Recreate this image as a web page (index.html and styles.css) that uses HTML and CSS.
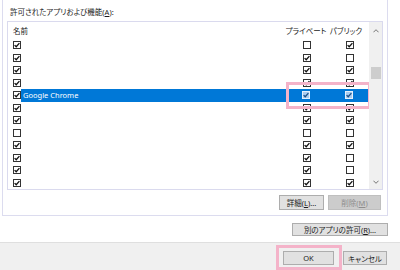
FILE: index.html
```html
<!DOCTYPE html>
<html lang="ja">
<head>
  <meta charset="UTF-8" />
  <title>許可されたアプリ</title>
  <link rel="stylesheet" href="styles.css">
</head>
<body>
  <svg class="defs" width="0" height="0">
    <symbol id="on" viewBox="0 0 8 8">
      <rect x="0.5" y="0.5" width="7" height="7" fill="#fff" stroke="#333"/>
      <path d="M1.6 4.1 L3.2 5.7 L6.4 2.1" fill="none" stroke="#111" stroke-width="1.3"/>
    </symbol>
    <symbol id="off" viewBox="0 0 8 8">
      <rect x="0.5" y="0.5" width="7" height="7" fill="#fff" stroke="#333"/>
    </symbol>
    <symbol id="sel" viewBox="0 0 8 8">
      <rect x="0.5" y="0.5" width="7" height="7" fill="#a9cdf0" stroke="#e6f1fc"/>
      <path d="M1.6 4.1 L3.2 5.7 L6.4 2.1" fill="none" stroke="#1d4f86" stroke-width="1.3"/>
    </symbol>
  </svg>

  <div class="group">
    <div class="group-label jp">許可されたアプリおよび機能(<u>A</u>):</div>

    <div class="listbox">
      <div class="list-main">
        <div class="list-head jp">
          <div class="col-name">名前</div>
          <div class="col-priv">プライベート</div>
          <div class="col-pub">パブリック</div>
        </div>
        <div class="list-body" id="rows"></div>
        <div class="mark mark-row"></div>
      </div>
      <div class="scrollbar">
        <svg class="arrow" viewBox="0 0 7 4"><path d="M0.5 3.5 L3.5 0.5 L6.5 3.5" fill="none" stroke="#606060"/></svg>
        <div class="thumb"></div>
        <svg class="arrow arrow-down" viewBox="0 0 7 4"><path d="M0.5 0.5 L3.5 3.5 L6.5 0.5" fill="none" stroke="#606060"/></svg>
      </div>
    </div>

    <div class="list-actions">
      <button class="btn btn-detail jp">詳細(<u>L</u>)...</button>
      <button class="btn btn-remove jp" disabled>削除(<u>M</u>)</button>
    </div>
  </div>

  <div class="other-row">
    <button class="btn btn-other jp">別のアプリの許可(<u>R</u>)...</button>
  </div>

  <div class="footer">
    <div class="ok-wrap">
      <button class="btn btn-ok">OK</button>
      <div class="mark mark-ok"></div>
    </div>
    <button class="btn btn-cancel jp">キャンセル</button>
  </div>

  <script>
    // [名前, プライベート, パブリック, 表示名]
    const apps = [
      [1, 0, 1, ""],
      [1, 1, 0, ""],
      [1, 1, 1, ""],
      [1, 1, 1, ""],
      [1, 1, 1, "Google Chrome"],
      [1, 1, 1, ""],
      [1, 1, 1, ""],
      [0, 0, 0, ""],
      [1, 1, 1, ""],
      [1, 1, 0, ""],
      [1, 1, 0, ""],
      [1, 1, 1, ""]
    ];

    const box = (on, selected) => {
      const id = selected ? (on ? "sel" : "off") : (on ? "on" : "off");
      return `<svg class="cb"><use href="#${id}"/></svg>`;
    };

    document.getElementById("rows").innerHTML = apps.map(a => {
      const selected = a[3] !== "";
      return `<div class="row${selected ? " selected" : ""}">
        <div class="col-name">${box(a[0], false)}<span class="name">${a[3]}</span></div>
        <div class="col-priv">${box(a[1], selected)}</div>
        <div class="col-pub">${box(a[2], selected)}</div>
      </div>`;
    }).join("");
  </script>
</body>
</html>
```

FILE: styles.css
```css
body {
  margin: 0;
  width: 400px;
  height: 270px;
  overflow: hidden;
  background: #fff;
  color: #1a1a1a;
  font-family: "Noto Sans", "Noto Sans CJK JP", sans-serif;
  font-size: 7.5px;
  display: flex;
  flex-direction: column;
}

.defs {
  position: absolute;
}

.jp {
  font-feature-settings: "palt";
}

.group {
  margin-left: 2px;
  width: 386px;
  box-sizing: border-box;
  border: 1px solid #dcdcef;
  border-top: none;
  padding: 6px 4px 5px 4px;
}

.group-label {
  margin-left: 3px;
  line-height: 13px;
  margin-bottom: 2px;
}

.listbox {
  height: 169px;
  box-sizing: border-box;
  border: 1px solid #dadaee;
  display: flex;
}

.list-main {
  flex: 1;
  position: relative;
  overflow: hidden;
}

.list-head,
.row {
  display: flex;
  align-items: center;
}

.list-head {
  height: 17px;
}

.row {
  height: 12.5px;
}

.col-name {
  flex: 1;
  display: flex;
  align-items: center;
  padding-left: 5px;
  height: 100%;
}

.col-priv {
  width: 45px;
  text-align: center;
}

.col-pub {
  width: 41px;
  text-align: center;
}

.list-head .col-priv,
.list-head .col-pub {
  padding-left: 1px;
  box-sizing: border-box;
}

.list-head .col-pub {
  padding-right: 6px;
}

.row .col-priv,
.row .col-pub {
  display: flex;
  justify-content: center;
  padding-left: 3px;
  box-sizing: border-box;
}

.cb {
  width: 8px;
  height: 8px;
  display: block;
  flex: none;
}

.name {
  margin-left: 1px;
  padding-left: 1px;
}

.row.selected {
  background: linear-gradient(to right, transparent 13px, #0078d7 13px);
  margin-right: 1px;
  color: #fff;
}

.row.selected .name {
  flex: 1;
}

.scrollbar {
  width: 13px;
  background: #f0f0f0;
  display: flex;
  flex-direction: column;
  align-items: center;
}

.arrow {
  width: 6px;
  height: 4px;
  margin-top: 7px;
}

.thumb {
  width: 10px;
  height: 12px;
  background: #cdcdcd;
  margin-top: 34px;
}

.arrow-down {
  margin-top: auto;
  margin-bottom: 5px;
}

.list-actions {
  display: flex;
  justify-content: flex-end;
  gap: 4px;
  margin-top: 5px;
  padding-right: 2px;
}

.btn {
  font-family: inherit;
  font-size: 7.5px;
  color: #1a1a1a;
  background: #e1e1e1;
  border: 1px solid #adadad;
  padding: 0;
  margin: 0;
  box-sizing: border-box;
  white-space: nowrap;
}

.btn-detail {
  width: 45px;
  height: 15px;
}

.btn-remove {
  width: 53px;
  height: 15px;
  background: #cccccc;
  border-color: #bfbfbf;
  color: #8d8d8d;
}

.other-row {
  display: flex;
  justify-content: flex-end;
  padding: 7px 12px 0 0;
}

.btn-other {
  width: 96px;
  height: 13px;
}

.footer {
  margin-top: 6px;
  flex: 1;
  background: #f0f0f0;
  border-top: 1px solid #dfdfdf;
  display: flex;
  justify-content: flex-end;
  align-items: flex-start;
  gap: 9px;
  padding: 8px 13px 0 0;
}

.ok-wrap {
  position: relative;
}

.btn-ok {
  width: 51px;
  height: 14px;
  display: block;
}

.btn-cancel {
  width: 44px;
  height: 14px;
}

.mark {
  position: absolute;
  border: 3px solid #f4b3c9;
  box-sizing: border-box;
  pointer-events: none;
}

.mark-ok {
  left: -7px;
  top: -6px;
  width: 66px;
  height: 25px;
}

.mark-row {
  left: 278px;
  top: 60px;
  width: 85px;
  height: 27px;
}
```
